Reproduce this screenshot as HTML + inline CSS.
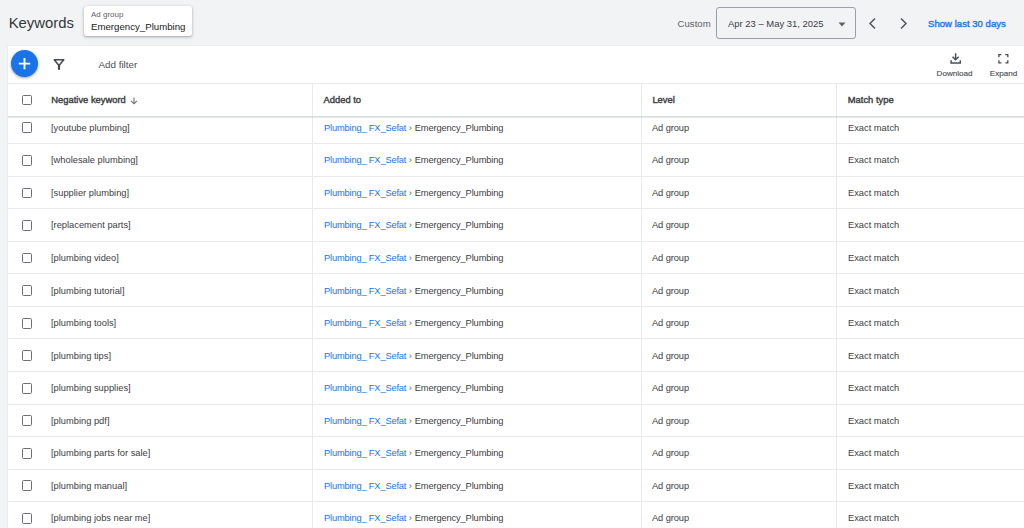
<!DOCTYPE html>
<html><head><meta charset="utf-8">
<style>
*{margin:0;padding:0;box-sizing:border-box}
html,body{width:1024px;height:528px;overflow:hidden;background:#f1f3f4;font-family:"Liberation Sans",sans-serif;position:relative}
.abs{position:absolute;white-space:nowrap}
#title{left:8.7px;top:13px;font-size:14.85px;color:#34373b;line-height:20px}
#chip{left:84px;top:6px;width:108px;height:30px;background:#fff;border-radius:3px;box-shadow:0 1px 2px rgba(60,64,67,.3),0 1px 3px 1px rgba(60,64,67,.12)}
#chip .l1{position:absolute;left:7px;top:4px;font-size:8px;color:#5f6368;line-height:10px;white-space:nowrap}
#chip .l2{position:absolute;left:7px;top:14.5px;font-size:9.66px;color:#202124;line-height:12px;white-space:nowrap}
#custom{left:677.6px;top:17.5px;font-size:9.6px;color:#5f6368;line-height:12px}
#datebox{left:716px;top:7.2px;width:140px;height:31.8px;border:1px solid #9aa0a6;border-radius:3px}
#datetxt{left:728px;top:17.5px;font-size:9.45px;color:#3c4043;line-height:12px}
#card{left:8px;top:46px;width:1016px;height:482px;background:#fff;box-shadow:0 0 1px rgba(60,64,67,.2)}
#fab{left:11px;top:50.2px;width:27px;height:27px;border-radius:50%;background:#1a73e8;box-shadow:0 1px 2px rgba(60,64,67,.3),0 1px 3px 1px rgba(60,64,67,.15)}
#addf{left:98.5px;top:59px;font-size:9.8px;color:#4d5156;line-height:12px}
.lbl{font-size:8.1px;color:#4d5156;line-height:10px;-webkit-text-stroke:0.15px #4d5156}
#sep1{left:8px;top:83px;width:1016px;height:1px;background:#e8eaed}
.hdr{font-size:9.4px;color:#3c4043;line-height:12px;top:93.5px;-webkit-text-stroke:0.4px #3c4043}
.vl{position:absolute;top:84px;width:1px;height:444px;background:#e8eaed}
#hbot{left:8px;top:116px;width:1016px;height:1px;background:#dadce0;box-shadow:0 1px 1px rgba(60,64,67,.15)}
.hl{position:absolute;left:8px;width:1016px;height:1px;background:#e8eaed}
.cb{position:absolute;left:21.8px;width:10.4px;height:10.8px;border:1.5px solid #6b6f74;border-radius:1.5px}
.row{position:absolute;left:0;width:1024px;height:32.52px}
.row .t{position:absolute;top:10.5px;font-size:9.8px;line-height:12px;color:#3c4043;white-space:nowrap;transform:scaleX(0.95);transform-origin:0 0}
.kw{left:51px;letter-spacing:0 !important}
.add{left:323.5px}
.lvl{left:652.4px;letter-spacing:-0.1px}
.mt{left:847.8px;letter-spacing:0 !important}
.lnk{color:#1a73e8;letter-spacing:-0.18px}.em{letter-spacing:-0.15px}
.sep{margin:0 3.2px 0 2.5px;color:#5f6368}
#show{left:928px;top:17.5px;font-size:9.6px;color:#1a73e8;line-height:12px;-webkit-text-stroke:0.35px #1a73e8}
</style></head><body>
<div class="abs" id="title">Keywords</div>
<div class="abs" id="chip"><div class="l1">Ad group</div><div class="l2">Emergency_Plumbing</div></div>
<div class="abs" id="custom">Custom</div>
<div class="abs" id="datebox"></div>
<div class="abs" id="datetxt">Apr 23 – May 31, 2025</div>
<svg class="abs" style="left:838.3px;top:21.7px" width="8" height="5" viewBox="0 0 8 5"><path d="M0.5 0.5h7l-3.5 4z" fill="#5f6368"/></svg>
<svg class="abs" style="left:866px;top:17px" width="12" height="13" viewBox="0 0 12 13"><path d="M9 1.5L4 6.5l5 5" fill="none" stroke="#4a4e52" stroke-width="1.4"/></svg>
<svg class="abs" style="left:898px;top:17px" width="12" height="13" viewBox="0 0 12 13"><path d="M3 1.5l5 5-5 5" fill="none" stroke="#4a4e52" stroke-width="1.4"/></svg>
<div class="abs" id="show">Show last 30 days</div>
<div class="abs" id="card"></div>
<div class="abs" id="fab"><svg width="27" height="27" viewBox="0 0 27 27"><path d="M13.5 7.9v11.4M7.8 13.6h11.4" stroke="#fff" stroke-width="1.9"/></svg></div>
<svg class="abs" style="left:53px;top:59px" width="12" height="11" viewBox="0 0 12 11"><path d="M1.2 0.8h9.6L6 6.6z" fill="none" stroke="#45494d" stroke-width="1.5" stroke-linejoin="round"/><rect x="4.9" y="5.4" width="2.2" height="5.4" fill="#45494d"/></svg>
<div class="abs" id="addf">Add filter</div>
<svg class="abs" style="left:949.5px;top:53px" width="12" height="11" viewBox="0 0 12 11"><path d="M5.6 0.3v6.4M2.5 3.7l3.1 3.1 3.1-3.1M1.1 7.3v2.6h9.2V7.3" fill="none" stroke="#4a4e52" stroke-width="1.5"/></svg>
<div class="abs lbl" style="left:936.6px;top:69px">Download</div>
<svg class="abs" style="left:998px;top:53.7px" width="11" height="10" viewBox="0 0 11 10"><path d="M0.9 3.2V0.7h2.5M7.3 0.7h2.5v2.5M9.8 6.3v2.6H7.3M3.4 8.9H0.9V6.3" fill="none" stroke="#4a4e52" stroke-width="1.3"/></svg>
<div class="abs lbl" style="left:989.8px;top:69px">Expand</div>
<div class="abs" id="sep1"></div>
<div class="vl" style="left:312px"></div>
<div class="vl" style="left:641px"></div>
<div class="vl" style="left:836px"></div>
<div class="cb" style="top:94.5px"></div>
<div class="abs hdr" style="left:51.3px">Negative keyword</div>
<svg class="abs" style="left:129.5px;top:96.5px" width="8" height="8" viewBox="0 0 8 8"><path d="M4 0.6v6.3M1.1 3.8L4 6.8 6.9 3.8" fill="none" stroke="#6b6f74" stroke-width="1.05"/></svg>
<div class="abs hdr" style="left:323.5px">Added to</div>
<div class="abs hdr" style="left:652.4px">Level</div>
<div class="abs hdr" style="left:847.8px">Match type</div>
<div class="row" style="top:111.34px">
<div class="cb" style="top:11.1px"></div>
<div class="t kw">[youtube plumbing]</div>
<div class="t add"><span class="lnk">Plumbing_ FX_Sefat</span><span class="sep">›</span><span class="em">Emergency_Plumbing</span></div>
<div class="t lvl">Ad group</div>
<div class="t mt">Exact match</div>
</div><div class="row" style="top:143.88px">
<div class="cb" style="top:11.1px"></div>
<div class="t kw">[wholesale plumbing]</div>
<div class="t add"><span class="lnk">Plumbing_ FX_Sefat</span><span class="sep">›</span><span class="em">Emergency_Plumbing</span></div>
<div class="t lvl">Ad group</div>
<div class="t mt">Exact match</div>
</div><div class="row" style="top:176.43px">
<div class="cb" style="top:11.1px"></div>
<div class="t kw">[supplier plumbing]</div>
<div class="t add"><span class="lnk">Plumbing_ FX_Sefat</span><span class="sep">›</span><span class="em">Emergency_Plumbing</span></div>
<div class="t lvl">Ad group</div>
<div class="t mt">Exact match</div>
</div><div class="row" style="top:208.98px">
<div class="cb" style="top:11.1px"></div>
<div class="t kw">[replacement parts]</div>
<div class="t add"><span class="lnk">Plumbing_ FX_Sefat</span><span class="sep">›</span><span class="em">Emergency_Plumbing</span></div>
<div class="t lvl">Ad group</div>
<div class="t mt">Exact match</div>
</div><div class="row" style="top:241.52px">
<div class="cb" style="top:11.1px"></div>
<div class="t kw">[plumbing video]</div>
<div class="t add"><span class="lnk">Plumbing_ FX_Sefat</span><span class="sep">›</span><span class="em">Emergency_Plumbing</span></div>
<div class="t lvl">Ad group</div>
<div class="t mt">Exact match</div>
</div><div class="row" style="top:274.07px">
<div class="cb" style="top:11.1px"></div>
<div class="t kw">[plumbing tutorial]</div>
<div class="t add"><span class="lnk">Plumbing_ FX_Sefat</span><span class="sep">›</span><span class="em">Emergency_Plumbing</span></div>
<div class="t lvl">Ad group</div>
<div class="t mt">Exact match</div>
</div><div class="row" style="top:306.61px">
<div class="cb" style="top:11.1px"></div>
<div class="t kw">[plumbing tools]</div>
<div class="t add"><span class="lnk">Plumbing_ FX_Sefat</span><span class="sep">›</span><span class="em">Emergency_Plumbing</span></div>
<div class="t lvl">Ad group</div>
<div class="t mt">Exact match</div>
</div><div class="row" style="top:339.15px">
<div class="cb" style="top:11.1px"></div>
<div class="t kw">[plumbing tips]</div>
<div class="t add"><span class="lnk">Plumbing_ FX_Sefat</span><span class="sep">›</span><span class="em">Emergency_Plumbing</span></div>
<div class="t lvl">Ad group</div>
<div class="t mt">Exact match</div>
</div><div class="row" style="top:371.70px">
<div class="cb" style="top:11.1px"></div>
<div class="t kw">[plumbing supplies]</div>
<div class="t add"><span class="lnk">Plumbing_ FX_Sefat</span><span class="sep">›</span><span class="em">Emergency_Plumbing</span></div>
<div class="t lvl">Ad group</div>
<div class="t mt">Exact match</div>
</div><div class="row" style="top:404.25px">
<div class="cb" style="top:11.1px"></div>
<div class="t kw">[plumbing pdf]</div>
<div class="t add"><span class="lnk">Plumbing_ FX_Sefat</span><span class="sep">›</span><span class="em">Emergency_Plumbing</span></div>
<div class="t lvl">Ad group</div>
<div class="t mt">Exact match</div>
</div><div class="row" style="top:436.79px">
<div class="cb" style="top:11.1px"></div>
<div class="t kw">[plumbing parts for sale]</div>
<div class="t add"><span class="lnk">Plumbing_ FX_Sefat</span><span class="sep">›</span><span class="em">Emergency_Plumbing</span></div>
<div class="t lvl">Ad group</div>
<div class="t mt">Exact match</div>
</div><div class="row" style="top:469.34px">
<div class="cb" style="top:11.1px"></div>
<div class="t kw">[plumbing manual]</div>
<div class="t add"><span class="lnk">Plumbing_ FX_Sefat</span><span class="sep">›</span><span class="em">Emergency_Plumbing</span></div>
<div class="t lvl">Ad group</div>
<div class="t mt">Exact match</div>
</div><div class="row" style="top:501.88px">
<div class="cb" style="top:11.1px"></div>
<div class="t kw">[plumbing jobs near me]</div>
<div class="t add"><span class="lnk">Plumbing_ FX_Sefat</span><span class="sep">›</span><span class="em">Emergency_Plumbing</span></div>
<div class="t lvl">Ad group</div>
<div class="t mt">Exact match</div>
</div>
<div class="hl" style="top:143.20px"></div>
<div class="hl" style="top:175.75px"></div>
<div class="hl" style="top:208.29px"></div>
<div class="hl" style="top:240.83px"></div>
<div class="hl" style="top:273.38px"></div>
<div class="hl" style="top:305.93px"></div>
<div class="hl" style="top:338.47px"></div>
<div class="hl" style="top:371.01px"></div>
<div class="hl" style="top:403.56px"></div>
<div class="hl" style="top:436.11px"></div>
<div class="hl" style="top:468.65px"></div>
<div class="hl" style="top:501.19px"></div>
<div class="abs" id="hbot"></div>
</body></html>
